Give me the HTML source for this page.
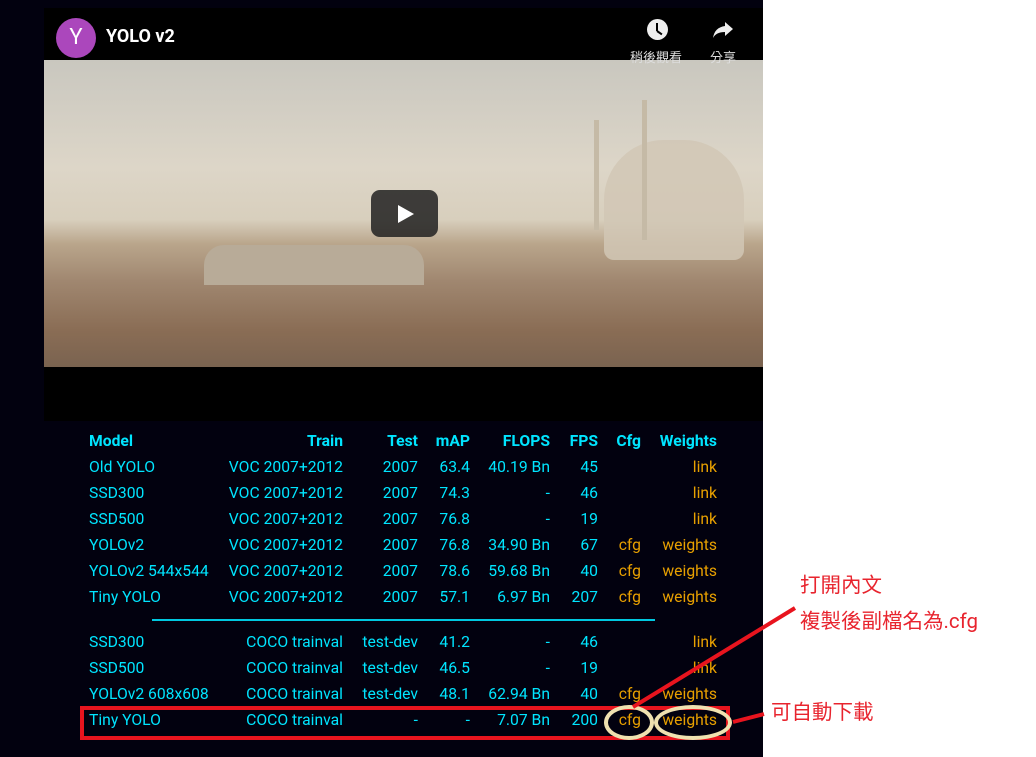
<!DOCTYPE html>
<html><head><meta charset="utf-8"><style>
body{margin:0;width:1036px;height:757px;background:#fff;position:relative;overflow:hidden;font-family:"Roboto","Liberation Sans","Noto Sans CJK TC",sans-serif}
#dark{position:absolute;left:0;top:0;width:763px;height:757px;background:#02010f}
#vid{position:absolute;left:44px;top:8px;width:719px;height:413px;background:#000}
#img{position:absolute;left:0;top:52px;width:719px;height:307px;overflow:hidden;background:linear-gradient(180deg,#c9c7bf 0%,#ddd6c8 35%,#d8cfbd 52%,#b9a58b 60%,#a08770 72%,#8a6d55 88%,#7a6350 100%)}
.t{position:absolute;font-size:15.7px;line-height:18px;white-space:nowrap}
.c{color:#00e5ff}.o{color:#e8a000}.h{font-weight:bold}
.r{text-align:right}
</style></head><body>
<div id="dark"></div>
<div id="vid">
 <div id="img">
  <div style="position:absolute;left:560px;top:80px;width:140px;height:120px;border-radius:60px 60px 10px 10px;background:#d1c7b5;opacity:.85"></div>
  <div style="position:absolute;left:598px;top:40px;width:5px;height:140px;background:#c5baa6"></div>
  <div style="position:absolute;left:550px;top:60px;width:5px;height:110px;background:#c5baa6"></div>
  <div style="position:absolute;left:160px;top:185px;width:220px;height:40px;border-radius:20px 20px 0 0;background:#b8ab98"></div>
  <div style="position:absolute;left:327px;top:130px;width:67px;height:47px;border-radius:9px;background:rgba(33,33,33,.85)"></div>
  <div style="position:absolute;left:354px;top:145px;width:0;height:0;border-left:16px solid #fff;border-top:9px solid transparent;border-bottom:9px solid transparent"></div>
 </div>
 <div style="position:absolute;left:12px;top:10px;width:40px;height:40px;border-radius:50%;background:#ab47bc;color:#fff;font-size:22px;line-height:40px;text-align:center">Y</div>
 <div style="position:absolute;left:62px;top:18px;color:#fff;font-size:18px;font-weight:bold">YOLO v2</div>
 <div style="position:absolute;left:603px;top:11px;width:21px;height:21px;border-radius:50%;background:#eee"></div>
 <div style="position:absolute;left:612px;top:15px;width:2px;height:8px;background:#000"></div>
 <div style="position:absolute;left:613px;top:22px;width:6px;height:2px;background:#000;transform:rotate(35deg);transform-origin:left"></div>
 <svg style="position:absolute;left:668px;top:12px" width="22" height="20" viewBox="0 0 22 20"><path d="M13 2 L21 9 L13 16 V12 C7 12 3 14 1 18 C2 11 6 7 13 6 Z" fill="#eee"/></svg>
 <div style="position:absolute;left:586px;top:39px;color:#ddd;font-size:13px">稍後觀看</div>
 <div style="position:absolute;left:666px;top:39px;color:#ddd;font-size:13px">分享</div>
</div>

<div class="t c h" style="left:89px;top:432px">Model</div>
<div class="t c h r" style="right:693px;top:432px">Train</div>
<div class="t c h r" style="right:618px;top:432px">Test</div>
<div class="t c h r" style="right:566px;top:432px">mAP</div>
<div class="t c h r" style="right:486px;top:432px">FLOPS</div>
<div class="t c h r" style="right:438px;top:432px">FPS</div>
<div class="t c h r" style="right:395px;top:432px">Cfg</div>
<div class="t c h r" style="right:319px;top:432px">Weights</div>

<div id="rows"></div>
<div style="position:absolute;left:152px;top:619px;width:503px;height:2px;background:#00c8e0"></div>

<div style="position:absolute;left:80px;top:706px;width:650px;height:34px;border:4px solid #e8141e;box-sizing:border-box"></div>
<div style="position:absolute;left:604px;top:705px;width:50px;height:35px;border:4px solid #efe1b0;border-radius:50%;box-sizing:border-box"></div>
<div style="position:absolute;left:654px;top:705px;width:78px;height:35px;border:4px solid #efe1b0;border-radius:50%;box-sizing:border-box"></div>
<svg style="position:absolute;left:0;top:0" width="1036" height="757"><line x1="633" y1="707" x2="795" y2="608" stroke="#e8141e" stroke-width="4"/><line x1="733" y1="722" x2="764" y2="714" stroke="#e8141e" stroke-width="4"/></svg>
<div style="position:absolute;left:800px;top:573px;color:#e8242e;font-size:20.5px;line-height:26px">打開內文</div>
<div style="position:absolute;left:800px;top:609px;color:#e8242e;font-size:20.5px;line-height:26px">複製後副檔名為.cfg</div>
<div style="position:absolute;left:771px;top:700px;color:#e8242e;font-size:20.5px;line-height:26px">可自動下載</div>

<script>
var d=[
[467,"Old YOLO","VOC 2007+2012","2007","63.4","40.19 Bn","45","","link"],
[493,"SSD300","VOC 2007+2012","2007","74.3","-","46","","link"],
[519,"SSD500","VOC 2007+2012","2007","76.8","-","19","","link"],
[545,"YOLOv2","VOC 2007+2012","2007","76.8","34.90 Bn","67","cfg","weights"],
[571,"YOLOv2 544x544","VOC 2007+2012","2007","78.6","59.68 Bn","40","cfg","weights"],
[597,"Tiny YOLO","VOC 2007+2012","2007","57.1","6.97 Bn","207","cfg","weights"],
[642,"SSD300","COCO trainval","test-dev","41.2","-","46","","link"],
[668,"SSD500","COCO trainval","test-dev","46.5","-","19","","link"],
[694,"YOLOv2 608x608","COCO trainval","test-dev","48.1","62.94 Bn","40","cfg","weights"],
[720,"Tiny YOLO","COCO trainval","-","-","7.07 Bn","200","cfg","weights"]];
var R=[693,618,566,486,438,395,319],h="";
d.forEach(function(r){var t=r[0]-9;
h+='<div class="t c" style="left:89px;top:'+t+'px">'+r[1]+'</div>';
for(var i=0;i<7;i++){h+='<div class="t r '+(i>=5?'o':'c')+'" style="right:'+R[i]+'px;top:'+t+'px">'+r[i+2]+'</div>';}
});
document.getElementById('rows').innerHTML=h;
</script>
</body></html>
